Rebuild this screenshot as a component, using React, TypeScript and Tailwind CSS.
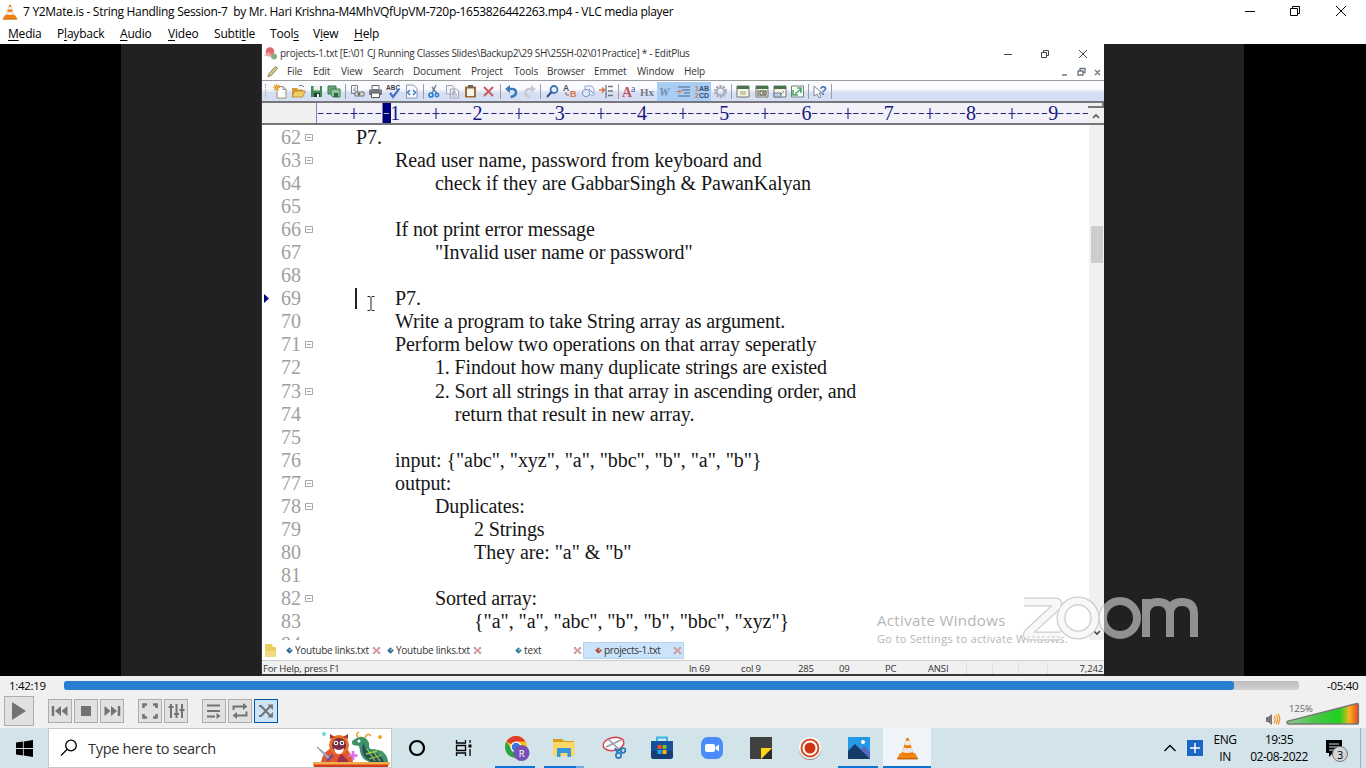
import React from "react";

const Cone = ({ s }: { s: number }) => (
  <svg width={s} height={s} viewBox="0 0 20 20">
    <path d="M3.2 14.2h13.6l2.2 4.6H1z" fill="#f28a13" />
    <path d="M1 18.2h18v1.3H1z" fill="#c45f06" />
    <path d="M9 .8h2l4.5 14.7q-5.500 2.400-11 0z" fill="#ef7d0e" />
    <path d="M8.300 3.300h3.400l1 3.400q-2.700 1-5.400 0z" fill="#eeeeee" />
    <path d="M6.500 9.200q3.500 1.300 7 0l1.200 3.800q-4.700 1.700-9.400 0z" fill="#e8e8e8" />
  </svg>
);

const vlcMenu = [
  ["w-[49px]", "", "M", "edia"],
  ["w-[63px]", "P", "l", "ayback"],
  ["w-[48px]", "", "A", "udio"],
  ["w-[46px]", "", "V", "ideo"],
  ["w-[56px]", "Subti", "t", "le"],
  ["w-[43px]", "Tool", "s", ""],
  ["w-[41px]", "V", "i", "ew"],
  ["w-[40px]", "", "H", "elp"],
];

const editMenu = [
  ["w-[26px]", "File"], ["w-[28px]", "Edit"], ["w-[32px]", "View"], ["w-[40px]", "Search"],
  ["w-[58px]", "Document"], ["w-[43px]", "Project"], ["w-[33px]", "Tools"], ["w-[47px]", "Browser"],
  ["w-[43px]", "Emmet"], ["w-[47px]", "Window"], ["w-[30px]", "Help"],
];

const normal = "tracking-[-0.090px]";
const tight = "tracking-[-0.140px]";
const loose = "tracking-[-0.040px]";

const lines: [number, number, string, boolean, string][] = [
  [62, 0, "P7.", true, loose],
  [63, 1, "Read user name, password from keyboard and", true, normal],
  [64, 2, "check if they are GabbarSingh & PawanKalyan", false, normal],
  [65, 0, "", false, normal],
  [66, 1, "If not print error message", true, tight],
  [67, 2, '"Invalid user name or password"', false, tight],
  [68, 0, "", false, normal],
  [69, 1, "P7.", false, loose],
  [70, 1, "Write a program to take String array as argument.", false, tight],
  [71, 1, "Perform below two operations on that array seperatly", true, normal],
  [72, 2, "1. Findout how many duplicate strings are existed", false, tight],
  [73, 2, "2. Sort all strings in that array in ascending order, and", true, tight],
  [74, 2, "    return that result in new array.", false, loose],
  [75, 0, "", false, normal],
  [76, 1, 'input: {"abc", "xyz", "a", "bbc", "b", "a", "b"}', false, loose],
  [77, 1, "output:", true, loose],
  [78, 2, "Duplicates:", true, tight],
  [79, 3, "2 Strings", false, tight],
  [80, 3, 'They are: "a" & "b"', false, loose],
  [81, 0, "", false, normal],
  [82, 2, "Sorted array:", true, tight],
  [83, 3, '{"a", "a", "abc", "b", "b", "bbc", "xyz"}', false, loose],
  [84, 0, "", false, normal],
];
const indent = ["pl-[40px]", "pl-[79px]", "pl-[119px]", "pl-[158px]"];

const I = ({ children, on }: { children: React.ReactNode; on?: boolean }) => (
  <span className={on ? "flex h-[19px] w-[18.2px] shrink-0 items-center justify-center bg-[#a9cdf3]" : "flex h-[18px] w-[18.2px] shrink-0 items-center justify-center"}>
    <svg width="15" height="15" viewBox="0 0 15 15" fill="none">{children}</svg>
  </span>
);
const Sep = () => <span className="mx-[1.7px] h-[15px] w-px shrink-0 bg-[#9a9ca6]" />;

const Toolbar = () => (
  <div className="flex h-[21px] items-center border-t border-[#9b9b9b] bg-linear-to-b from-[#fafbfe] from-40% to-[#d5def2] to-60% pl-[3px]">
    <span className="mr-[5px] h-[14px] border-l border-dotted border-[#a0a5b5]" />
    <I><path d="M4 2.500h6l3 3V14H4z" fill="#fff" stroke="#9a927c" /><path d="M10 2.500v3h3" stroke="#9a927c" /><path d="M3.500 0v7M0 3.500h7M1 1l5 5M6 1L1 6" stroke="#e9a53a" strokeWidth="1.200" /></I>
    <I><path d="M1 4h5l1 1.500h5V13H1z" fill="#d79c30" /><path d="M3.500 7H14.500l-3 6H1z" fill="#f3cb63" stroke="#a87a28" strokeWidth=".7" /><path d="M8 2q3-2 5 1" stroke="#56739c" /></I>
    <I><path d="M2 2h11v11H2z" fill="#3f8a58" /><path d="M4.500 2H11v4.500H4.500z" fill="#e5f0e7" /><path d="M5 9h6v4H5z" fill="#203f2d" /><path d="M8 10h2v3H8z" fill="#eee" /></I>
    <I><path d="M1 2h8v8H1z" fill="#69a57b" stroke="#397b50" /><path d="M4 5h9v8H6L4 11z" fill="#8dc49a" stroke="#397b50" /><path d="M7 9h4v4H7z" fill="#2f6643" /></I>
    <Sep />
    <I><path d="M1.500 1.500h6v8h-6zM4 4H6M3 6h3" stroke="#7c7f87" /><path d="M5 8h9v4H5z" fill="#ddd" stroke="#6c6f77" /><circle cx="9" cy="10" r="1.500" fill="#666" /></I>
    <I><path d="M4 1.500h7v4H4z" fill="#fff" stroke="#666" /><path d="M1 5.500h13V11H1z" fill="#777b83" /><path d="M3.500 9h8v4.500h-8z" fill="#fff" stroke="#555" /></I>
    <I><text x="0" y="5.500" fontSize="6.500" fontWeight="bold" fill="#3b3b45" fontFamily="Liberation Sans">ABC</text><path d="M4 9l3 4 6-8" stroke="#4470ce" strokeWidth="2.200" /></I>
    <I><path d="M2.500 1h7L13 4.500V14H2.500z" fill="#f8faff" stroke="#8f99b0" /><path d="M6 6L3.500 8.500 6 11M9 6l2.500 2.500L9 11" stroke="#3b83c8" strokeWidth="1.500" /></I>
    <Sep />
    <I><path d="M9 1L5 9M5 3l5 7" stroke="#5a7994" strokeWidth="1.300" /><circle cx="4" cy="11" r="2" stroke="#2c80cf" strokeWidth="1.700" /><circle cx="10" cy="11" r="1.700" stroke="#2c80cf" strokeWidth="1.500" /></I>
    <I><path d="M1.500 1.500h6l1.500 2V10H1.500zM5.500 5h6l2 2v7h-8z" fill="#f2f4fa" stroke="#a0a4b2" /><path d="M7 8h4M7 10h5M7 12h5" stroke="#a0a4b2" /></I>
    <I><path d="M2 2.500h11v11H2z" fill="#9d6839" /><path d="M4 4.500h7v7.500H4z" fill="#f3f3ee" /><path d="M5 1h5v3H5z" fill="#6d6359" /></I>
    <I><path d="M3 3l9 9M12 3l-9 9" stroke="#ce5555" strokeWidth="1.800" /></I>
    <Sep />
    <I><path d="M3 5h5q4 0 4 3.500T6.500 13" stroke="#3c7ab8" strokeWidth="2.600" /><path d="M6 1v8L1 5z" fill="#3c7ab8" /></I>
    <I><path d="M12 5H7.500Q3.500 5 3.500 8.500T8 13" stroke="#c4c9d4" strokeWidth="2.400" /><path d="M9 1v8l5-4z" fill="#c4c9d4" /></I>
    <Sep />
    <I><circle cx="9" cy="5.500" r="3.500" fill="#e6f1ff" stroke="#3f75b4" strokeWidth="1.800" /><path d="M6.500 8L2 13" stroke="#2d5083" strokeWidth="2" /></I>
    <I><text x="0" y="7" fontSize="8.500" fontWeight="bold" fill="#4c4c55" fontFamily="Liberation Sans">A</text><text x="7" y="13" fontSize="9" fontWeight="bold" fill="#df7049" fontFamily="Liberation Sans">B</text><path d="M3 8v3h3" stroke="#777" /></I>
    <I><path d="M4 2h7l2 3v6H4z" fill="#eef3ff" stroke="#92a7cd" /><circle cx="5" cy="9" r="3.700" fill="#dce7fb" stroke="#7d98c7" /><path d="M8 5l4 4" stroke="#6585bf" /></I>
    <I><path d="M0 6h5M3 3.500L5.500 6 3 8.500" stroke="#dc7745" strokeWidth="1.600" /><path d="M7 1v13M9 2.500h5M9 7h5M9 11.500h5" stroke="#70747d" strokeWidth="1.300" /></I>
    <Sep />
    <I><text x="0" y="13" fontSize="14" fontWeight="bold" fill="#c3545f" fontFamily="Liberation Serif">A</text><text x="9" y="8" fontSize="10" fill="#6265a6" fontFamily="Liberation Serif">a</text></I>
    <I><text x="0" y="12" fontSize="11" fontWeight="bold" fill="#77798b" fontFamily="Liberation Serif">Hx</text></I>
    <I on><text x="1" y="12" fontSize="12" fontStyle="italic" fontWeight="bold" fill="#6f8fb0" fontFamily="Liberation Serif">W</text></I>
    <I on><path d="M2 3h12M6 6h8M8 9h6M2 12h12" stroke="#49688a" /><path d="M0 7.500h5M3 5.500L5 7.500 3 9.500" stroke="#da7647" /></I>
    <I on><text x="0" y="7" fontSize="7" fontWeight="bold" fill="#d37a4f" fontFamily="Liberation Sans">1<tspan fill="#384e79">AB</tspan></text><text x="0" y="14" fontSize="7" fontWeight="bold" fill="#d37a4f" fontFamily="Liberation Sans">2<tspan fill="#384e79">CD</tspan></text></I>
    <I><circle cx="7.500" cy="7.500" r="5.500" stroke="#a5abb6" strokeWidth="2" strokeDasharray="2.200 1.250" /><circle cx="7.500" cy="7.500" r="3.700" stroke="#a5abb6" strokeWidth="1.700" /></I>
    <Sep />
    <I><path d="M2 2h12v11H2z" fill="#f5f5e6" stroke="#70776b" /><path d="M2 2h12v3H2z" fill="#49734e" /><path d="M5 7h6v4H5z" fill="#cccaa5" /></I>
    <I><path d="M2 2h12v11H2z" fill="#f5f5e6" stroke="#70776b" /><path d="M2 2h12v3H2z" fill="#49734e" /><path d="M4 6v6M6 7h6v4H6zM8 9h3" stroke="#6d6e61" strokeWidth="1.300" /></I>
    <I><path d="M2 2h12v11H2z" fill="#f5f5e6" stroke="#70776b" /><path d="M2 2h12v3H2z" fill="#49734e" /><path d="M2 9h7v4H2zM8 11l4-4" fill="#bed1e2" stroke="#6d829a" /></I>
    <I><path d="M1.500 2h12v11h-12z" fill="#f8fff8" stroke="#778078" /><path d="M5 10l6-5M7 4h4v5M3 6v5h5" stroke="#4ba766" strokeWidth="1.600" /></I>
    <Sep />
    <I><path d="M2 2v10l3-2 2 4 2-1-2-4h3z" fill="#fff" stroke="#666b78" strokeWidth=".8" /><text x="7.500" y="11" fontSize="12" fontWeight="bold" fill="#3e6fbc" fontFamily="Liberation Sans">?</text></I>
    <Sep />
  </div>
);

const Ruler = () => (
  <div className="flex h-[24px] overflow-hidden border-b-2 border-t-2 border-b-[#777777] border-t-[#77777b] bg-[#f0f0f0]">
    <div className="w-[55px] shrink-0 border-r border-[#7f7fc4]" />
    <div className="flex w-[771px] shrink-0 overflow-hidden bg-[#f1f1f7]">
      {[1, 2, 3, 4, 5, 6, 7, 8, 9, 10].map((n) => (
        <div key={n} className="flex w-[82.250px] shrink-0 items-center">
          <svg className="shrink-0" width="74" height="20" viewBox="0 0 74 20" stroke="#25258c">
            {n === 1 && <path d="M65.500 0h8.500v20h-8.500z" fill="#00007c" stroke="none" />}
            <path d="M1 10.500h73" strokeDasharray="5.400 2.820" />
            <path d="M37 5v11M33.500 10.500h7" strokeWidth="1.100" />
            {n === 1 && <path d="M67 10.500h5" stroke="#bbb" />}
          </svg>
          <span className="flex w-[8.250px] shrink-0 justify-center font-['Liberation_Serif',serif] text-[20px] leading-[20px] text-[#191982]">{n < 10 ? n : ""}</span>
        </div>
      ))}
    </div>
    <div className="flex flex-1 flex-col items-center bg-[#f0f0f0]">
      <div className="h-[5px] w-full border-b-2 border-r-2 border-[#777]" />
      <svg className="mt-[5px]" width="8" height="6"><path d="M1 5l3-3 3 3" fill="none" stroke="#555" strokeWidth="1.600" /></svg>
    </div>
  </div>
);

const TabX = () => (
  <svg className="shrink-0" width="9" height="9" viewBox="0 0 9 9"><path d="M1 1.500l7 6M8 1.500l-7 6" stroke="#d99a9f" strokeWidth="1.800" /><path d="M1 7.500h2M6 7.500h2M1 1.500h2M6 1.500h2" stroke="#aaa" /></svg>
);
const Dia = ({ c }: { c: string }) => (
  <svg className="shrink-0" width="7" height="7" viewBox="0 0 7 7"><path d="M3.500 .2l3.300 3.300-3.300 3.300L.2 3.500z" fill={c} /><circle cx="4.300" cy="2.800" r="1" fill="#a9cbe0" /></svg>
);

const Editor = () => (
  <div className="relative flex w-[843px] shrink-0 flex-col border-b-2 border-l border-[#383838] bg-white font-['Open_Sans',sans-serif] text-[#333333]">
    <div className="flex h-[19px] items-center pl-[2px]">
      <svg width="13" height="13" viewBox="0 0 13 13"><circle cx="6" cy="4.500" r="4.200" fill="#df696c" /><path d="M0 8l5-3 3 3-2 2z" fill="#f0a19a" /><circle cx="10" cy="9.500" r="3" fill="#8cad7e" /></svg>
      <span className="ml-[3px] w-[728px] whitespace-pre text-[10px] tracking-[-0.280px]">projects-1.txt [E:\01 CJ Running Classes Slides\Backup2\29 SH\25SH-02\01Practice] * - EditPlus</span>
      <svg className="ml-[-6px] shrink-0" width="90" height="14" viewBox="0 0 90 14" fill="none" stroke="#444"><path d="M2 7.500h8M39.500 5.500h5v5h-5zM41.500 5V3.500h5v5H45M77 3l8 8M85 3l-8 8" /></svg>
    </div>
    <div className="flex h-[17px] items-center pl-[4px]">
      <svg width="14" height="14" viewBox="0 0 14 14"><path d="M2 12l1-3 7-8 2.500 2-7 8z" fill="#d2c38a" stroke="#776b49" strokeWidth=".8" /></svg>
      <div className="ml-[8px] flex text-[10px] tracking-[-0.150px]">
        {editMenu.map(([w, t]) => <span key={t} className={w + " shrink-0 whitespace-nowrap"}>{t}</span>)}
      </div>
      <svg className="ml-[344px] shrink-0" width="46" height="12" viewBox="0 0 46 12" fill="none" stroke="#6b7580" strokeWidth="1.300"><path d="M4 9h5M20 5h5v4h-5zM22 4.500v-2h5v4h-2M37 4l5 5M42 4l-5 5" /></svg>
    </div>
    <Toolbar />
    <Ruler />
    <div className="flex h-[515px] overflow-hidden">
      <div className="w-[827px] overflow-hidden pt-px font-['Liberation_Serif',serif] text-[20px] text-[#161616]">
        {lines.map(([n, d, t, fold, track]) => (
          <div key={n} className="flex h-[23.050px] items-center whitespace-pre leading-[23px]">
            <span className="flex w-[19px] shrink-0">
              {n === 69 && <svg className="ml-[2px]" width="6" height="9"><path d="M0 0l5 4.500L0 9z" fill="#00007c" /></svg>}
            </span>
            <span className="w-[20px] shrink-0 text-[#a0a0a0]">{n}</span>
            <span className="flex w-[14px] shrink-0 justify-end pr-px">
              {fold && <svg width="9" height="9" viewBox="0 0 9 9" fill="none" stroke="#a8a8a8"><path d="M.5 1.500h7v6h-7zM2 4.500h4" /></svg>}
            </span>
            {n === 69 ? (
              <span className="ml-px flex items-center">
                <span className="ml-[39px] h-[21px] w-[2px] bg-[#222]" />
                <svg className="ml-[9px] mr-[19px] mt-[10px]" width="10" height="15" viewBox="0 0 10 15" fill="none" stroke="#222"><path d="M1.500 .5h2.500l1 1 1-1h2.500M5 1.500v12M1.500 14.500h2.500l1-1 1 1h2.500" /></svg>
                <span className={track}>{t}</span>
              </span>
            ) : (
              <span className={"ml-px " + indent[d] + " " + track}>{t}</span>
            )}
          </div>
        ))}
      </div>
      <div className="flex flex-1 flex-col items-center bg-[#f0f0f0]">
        <div className="mt-[101px] h-[37px] w-[12px] bg-[#cdcdcd]" />
        <svg className="mt-[367px]" width="8" height="6"><path d="M1 1l3 3 3-3" fill="none" stroke="#444" strokeWidth="1.600" /></svg>
      </div>
    </div>
    <div className="flex h-[20px] items-center whitespace-nowrap pl-[3px] text-[10px] tracking-[-0.150px]">
      <svg className="shrink-0" width="12" height="13" viewBox="0 0 12 13"><path d="M0 0h7l1 3h3v10H0z" fill="#e9cf5e" /><path d="M0 7h11v6H0z" fill="#f1dc82" /></svg>
      <span className="ml-[9px] flex w-[91px] items-center"><Dia c="#2f6c94" /><span className="ml-[2px] w-[77px] shrink-0 tracking-[-0.250px]">Youtube links.txt</span><TabX /></span>
      <span className="ml-[10px] flex w-[91px] items-center"><Dia c="#2f6c94" /><span className="ml-[2px] w-[77px] shrink-0 tracking-[-0.250px]">Youtube links.txt</span><TabX /></span>
      <span className="ml-[37px] flex w-[68px] items-center"><Dia c="#2f8094" /><span className="ml-[2px] w-[49px] shrink-0">text</span><TabX /></span>
      <span className="flex h-[17px] w-[101px] items-center border border-[#b3d4f2] bg-[#cbe3fb] pl-[11px]"><Dia c="#b8492f" /><span className="ml-[2px] w-[69px] shrink-0 tracking-[-0.350px]">projects-1.txt</span><TabX /></span>
    </div>
    <div className="flex h-[14px] items-center border-t border-[#cccccc] bg-[#f0f0f0] pl-px pt-[2px] text-[9.500px] leading-[12px] tracking-[-0.150px]">
      <span className="w-[426px]">For Help, press F1</span><span className="w-[52px]">ln 69</span><span className="w-[57px]">col 9</span><span className="w-[41px]">285</span><span className="w-[46px]">09</span><span className="w-[43px]">PC</span><span className="w-[38px]">ANSI</span>
      <span className="h-full w-[26px] border-l border-[#ddd]" /><span className="h-full w-[26px] border-l border-[#ddd]" /><span className="h-full w-[29px] border-l border-[#ddd]" /><span className="flex h-full flex-1 items-center justify-end border-l border-[#ddd] pr-px">7,242</span>
    </div>
    <div className="absolute left-[615px] top-[566px] whitespace-nowrap text-[#b5b5b5]">
      <div className="text-[15px] leading-[20px] tracking-[0.350px]">Activate Windows</div>
      <div className="text-[11px] leading-[17px] tracking-[0.310px]">Go to Settings to activate Windows.</div>
    </div>
  </div>
);

const zoomShapes = (
  <>
    <path d="M3 6h31q5 0 1 5L8 36q-4 4 1 4h31" />
    <circle cx="57" cy="22" r="17" />
    <circle cx="99" cy="22" r="17" />
    <path d="M125 41V3M125 18q0-12 12-12t12 12V41M149 18q0-12 12-12t12 12V41" />
  </>
);
const ZoomMark = () => (
  <svg className="absolute left-[1021px] top-[552px]" width="180" height="46" viewBox="0 0 180 46" fill="none">
    <defs>
      <clipPath id="l"><path d="M0 0h83v46H0z" /></clipPath>
      <clipPath id="r"><path d="M83 0h97v46H83z" /></clipPath>
    </defs>
    <g clipPath="url(#l)">
      <g stroke="#cdcdcd" strokeWidth="9">{zoomShapes}</g>
      <g stroke="#f8f8f8" strokeWidth="6.500">{zoomShapes}</g>
    </g>
    <path d="M6 41h34" stroke="#cdcdcd" strokeDasharray="3 2" />
    <g clipPath="url(#r)" stroke="#919191" strokeWidth="8">{zoomShapes}</g>
  </svg>
);

const Btn = ({ children, cls }: { children: React.ReactNode; cls?: string }) => (
  <span className={"flex size-[24px] shrink-0 items-center justify-center border " + (cls || "border-[#adadad] bg-[#e1e1e1]")}>
    <svg width="18" height="18" viewBox="0 0 18 18" fill="none" stroke="#737373" strokeWidth="2">{children}</svg>
  </span>
);

const TaskItem = ({ children, cls }: { children: React.ReactNode; cls?: string }) => (
  <span className={"relative flex h-[40px] shrink-0 items-center justify-center " + (cls || "w-[49px]")}>{children}</span>
);
const Line = () => <span className="absolute bottom-0 left-[4px] h-[2px] w-[40px] bg-[#0a74d4]" />;

export default function App() {
  return (
    <div className="flex h-[768px] w-[1366px] flex-col overflow-hidden bg-white font-['Open_Sans',sans-serif] text-black">
      <div className="flex h-[22px] shrink-0 items-center pl-[2px] pt-px">
        <Cone s={16} />
        <span className="ml-[5px] w-[1220px] shrink-0 whitespace-pre text-[12px] tracking-[-0.297px]">7 Y2Mate.is - String Handling Session-7  by Mr. Hari Krishna-M4MhVQfUpVM-720p-1653826442263.mp4 - VLC media player</span>
        <svg className="-mt-[2px] shrink-0" width="110" height="16" viewBox="0 0 110 16" fill="none" stroke="#000"><path d="M2 8.500h10M47.500 5.500h7v7h-7zM49.500 5V3.500h7v7H55M93 3l10 10M103 3L93 13" /></svg>
      </div>
      <div className="flex h-[22px] shrink-0 items-center pl-[8px] pt-[2px] text-[12px] tracking-[-0.200px]">
        {vlcMenu.map(([w, a, u, b]) => (
          <span key={a + u + b} className={w}>{a}<u className="underline-offset-2">{u}</u>{b}</span>
        ))}
      </div>
      <div className="relative flex h-[632px] shrink-0 bg-black">
        <div className="ml-[121px] w-[140px] shrink-0 bg-[#212121]" />
        <Editor />
        <div className="w-[140px] shrink-0 bg-[#212121]" />
        <ZoomMark />
      </div>

      <div className="flex h-[52px] shrink-0 flex-col bg-[#f0f0f0]">
        <div className="flex h-[19px] items-center">
          <span className="w-[64px] pl-[9px] text-[11.500px] tracking-[-0.300px]">1:42:19</span>
          <div className="mb-[1px] h-[9px] w-[1235px] rounded-[3px] bg-linear-to-b from-[#bdbdbd] to-[#d2d2d2]"><div className="h-full w-[1170px] rounded-[3px] bg-[#277dd0]" /></div>
          <span className="ml-[28px] text-[11.500px] tracking-[-0.300px]">-05:40</span>
        </div>
        <div className="flex h-[33px] items-center pb-[2px] pl-[4px]">
          <span className="flex size-[30px] items-center justify-center border border-[#adadad] bg-[#e1e1e1]"><svg width="16" height="18"><path d="M1 0l14 9L1 18z" fill="#737373" /></svg></span>
          <div className="ml-[14px] flex gap-[2px]">
            <Btn><path d="M2 4v10" strokeWidth="2.500" /><path d="M10 4v10L4 9zM16.500 4v10l-6-5z" fill="#737373" stroke="none" /></Btn>
            <Btn><path d="M4 4h10v10H4z" fill="#737373" stroke="none" /></Btn>
            <Btn><path d="M16 4v10" strokeWidth="2.500" /><path d="M8 4v10l6-5zM1.500 4v10l6-5z" fill="#737373" stroke="none" /></Btn>
          </div>
          <div className="ml-[14px] flex gap-[2px]">
            <Btn><path d="M6 2.500H2.500V6M12 2.500h3.500V6M6 15.500H2.500V12M12 15.500h3.500V12" strokeWidth="2.600" /></Btn>
            <Btn><path d="M4 2v14M9.500 2v14M15 2v14M1.500 5h5M7 12h5M12.500 8h5" /></Btn>
          </div>
          <div className="ml-[14px] flex gap-[2px]">
            <Btn><path d="M2 3.500h13M2 9h13M2 14.500h8" /><path d="M11.500 11v6l4-3z" fill="#737373" stroke="none" /></Btn>
            <Btn><path d="M2.500 8V4.500h10M15.500 9.500V13.500h-10" /><path d="M12 1v7l4.500-3.500zM6 10v7L1.500 13.500z" fill="#737373" stroke="none" /></Btn>
            <Btn cls="border-[#00559f] bg-[#cce4f7]"><path d="M2 4h2l9 9.500M2 14h2l9-9.500" /><path d="M10.500 2.500H16V8zM10.500 15.500H16V10z" fill="#737373" stroke="none" /></Btn>
          </div>
          <svg className="ml-[987px] mt-[16px]" width="16" height="14" viewBox="0 0 16 14" fill="none"><path d="M1 5v5h2l4 3V2L3 5z" fill="#777" /><path d="M9 4q2 3.500 0 7M11 2.500q3 5 0 9.500M13 1.500q3.500 5.500 0 11" stroke="#f29a2c" strokeWidth="1.300" /></svg>
          <div className="relative ml-[4px] h-[24px] w-[76px] self-start">
            <svg width="75" height="30" viewBox="0 0 75 30"><defs><linearGradient id="v"><stop offset="0" stopColor="#8ccc8c" /><stop offset=".4" stopColor="#49c649" /><stop offset=".74" stopColor="#20d020" /><stop offset=".87" stopColor="#f5b71b" /><stop offset="1" stopColor="#ee3f25" /></linearGradient></defs><path d="M2 27.500Q1 27 3 26L72 8.500q1.500 0 1.500 1.500V28q0 1-1 1H3q-1 0-1-1.500z" fill="url(#v)" stroke="#777" strokeWidth="1.300" /></svg>
            <span className="absolute left-[4px] top-[7px] text-[9.500px] tracking-[-0.100px] text-[#666]">125%</span>
          </div>
        </div>
      </div>

      <div className="flex h-[40px] shrink-0 items-center bg-[#d3e3ea]">
        <span className="flex w-[48px] shrink-0 justify-center"><svg width="17" height="17" viewBox="0 0 16 16"><path d="M0 2.300L6.500 1.400v6.200H0zM7.300 1.300L16 0v7.600H7.300zM0 8.400h6.500v6.200L0 13.700zM7.300 8.400H16V16l-8.700-1.300z" /></svg></span>
        <div className="flex h-[40px] w-[344px] shrink-0 items-center border border-[#c6c8ca] bg-white pl-[11px]">
          <svg width="18" height="18" viewBox="0 0 18 18" fill="none" stroke="#000" strokeWidth="1.300"><circle cx="11" cy="6.500" r="5.300" /><path d="M7 10.500L1 16.500" /></svg>
          <span className="ml-[10px] mt-px w-[225px] text-[14.500px] tracking-[-0.300px] text-[#303030]">Type here to search</span>
          <svg width="78" height="38" viewBox="0 0 78 38">
            <path d="M0 34h76l-1 4H1z" fill="#d93b1a" /><path d="M0 33h77v2.500H0z" fill="#f2b04b" />
            <path d="M8 33q2-11 12-15l14 2q6 7 6 13z" fill="#e4572e" /><path d="M28 24l8 9H24z" fill="#9d2c4e" />
            <circle cx="26" cy="16" r="10" fill="#e96f22" /><path d="M17 10l0-5 5 3M35 10l0-5-5 3" fill="#9e3b28" /><circle cx="26" cy="16" r="7" fill="#7e2a49" /><circle cx="23" cy="14" r="2.300" fill="#fff" /><circle cx="29" cy="14" r="2.300" fill="#fff" /><circle cx="23" cy="14" r="1" /><circle cx="29" cy="14" r="1" /><path d="M21 19q5 4 10 0-1 6-5 6t-5-6z" fill="#fff" />
            <path d="M4 18l14 11-2 2z" fill="#b9bfd9" stroke="#6b6c99" strokeWidth=".7" /><path d="M20 26l-6 6" stroke="#5c4b9d" strokeWidth="2" />
            <path d="M40 16q-3-4 2-6 5-4 10-1 5 3 4 9 1 3 5 2l8 2q6 5 6 11H56q-8-3-9-11l-1-5z" fill="#3d9367" /><path d="M51 14q1 9 8 10 9 0 12 9H58q-9-5-9-15z" fill="#235457" /><path d="M54 20l8 12M60 22l7 10M53 25l11-3M56 30l13-4" stroke="#9ec94c" strokeWidth="1.300" /><path d="M46 9q-5-4 0-6M52 9q2-6 6-2" stroke="#e2a534" strokeWidth="1.600" fill="none" /><circle cx="46" cy="12" r="1.500" fill="#fff" />
            <path d="M40 22v9M35.500 26.500h9" stroke="#d771e8" strokeWidth="2.600" /><circle cx="11" cy="5" r="2" fill="#6bd4dc" /><circle cx="67" cy="8" r="2" fill="#f4a51f" />
          </svg>
        </div>
        <TaskItem><svg width="18" height="18" fill="none" stroke="#000" strokeWidth="2.200"><circle cx="9" cy="9" r="7" /></svg></TaskItem>
        <TaskItem><svg className="mr-[3px]" width="18" height="18" viewBox="0 0 18 18" fill="none" stroke="#000" strokeWidth="1.300"><path d="M1.500 1v3h9V1M1.500 17v-3h9v3M1.500 6.500h9v5h-9zM15 1v3M15 10v7" /><path d="M13.500 5.500h3v3h-3z" fill="#000" stroke="none" /></svg></TaskItem>
        <TaskItem cls="ml-px w-[49px]">
          <svg width="28" height="28" viewBox="0 0 28 28"><circle cx="14" cy="13" r="11" fill="#fbc116" /><path d="M14 13L4.500 7.500A11 11 0 0 1 23.500 7.500H14z" fill="#df3c2c" /><path d="M4.500 7.500A11 11 0 0 0 14 24l5-8.500-5-2.500-4.500 2.500z" fill="#2aa14b" /><circle cx="14" cy="13" r="5.500" fill="#fff" /><circle cx="14" cy="13" r="4.300" fill="#3478e5" /><circle cx="19.500" cy="19" r="8" fill="#7752b5" /><text x="16.700" y="22.500" fontSize="9.500" fill="#fff" fontFamily="Open Sans">R</text></svg><Line />
        </TaskItem>
        <TaskItem>
          <svg className="mr-[2px]" width="22" height="20" viewBox="0 0 22 20"><path d="M0 1h9l2 2h10v15H0z" fill="#d99d16" /><path d="M0 4h21.500v14H0z" fill="#fbd668" /><path d="M4 19v-8q0-1 1-1h12q1 0 1 1v8h-3.500v-4h-7v4z" fill="#3297dc" /></svg><Line /><span className="absolute bottom-0 left-[36px] h-[2px] w-[8px] bg-[#6eacdf]" />
        </TaskItem>
        <TaskItem>
          <svg width="26" height="26" viewBox="0 0 26 26" fill="none"><ellipse cx="12.500" cy="9" rx="10.500" ry="6.500" transform="rotate(-12 12.500 9)" fill="#fbfbfb" stroke="#d7464d" strokeWidth="1.500" /><path d="M5 12L20 5M7 4l14 13" stroke="#9b9fa4" strokeWidth="1.700" /><path d="M14 13l3 5M21 14l-5 2" stroke="#247bbb" strokeWidth="2" /><circle cx="17.500" cy="20.500" r="2.600" stroke="#247bbb" strokeWidth="1.700" /><circle cx="22" cy="15.500" r="2.300" stroke="#247bbb" strokeWidth="1.700" /></svg>
        </TaskItem>
        <TaskItem>
          <svg className="mr-[2px]" width="24" height="24" viewBox="0 0 24 24"><path d="M7 6V1.500h10V6" fill="none" stroke="#36b8e6" strokeWidth="2" /><path d="M1 5h22v15q0 3-3 3H4q-3 0-3-3z" fill="#155099" /><path d="M1 15h22v5q0 3-3 3H4q-3 0-3-3z" fill="#133e76" /><path d="M7.500 9h4v4h-4z" fill="#f05328" /><path d="M12.500 9h4v4h-4z" fill="#80bc25" /><path d="M7.500 14h4v4h-4z" fill="#20a4ed" /><path d="M12.500 14h4v4h-4z" fill="#ffb911" /></svg>
        </TaskItem>
        <TaskItem><svg width="22" height="22" viewBox="0 0 22 22"><rect width="22" height="22" rx="7" fill="#4a8cfa" /><rect x="4" y="7" width="10" height="8" rx="2" fill="#fff" /><path d="M14.500 10L18 7.500v7L14.500 12z" fill="#fff" /></svg></TaskItem>
        <TaskItem><svg width="22" height="22" viewBox="0 0 22 22"><path d="M0 0h22v11L11 22H0z" fill="#404040" /><path d="M22 11v11H11z" fill="#2b2b2b" /><path d="M11 11h11L11 22z" fill="#ffd60f" /></svg></TaskItem>
        <TaskItem><svg width="24" height="24" viewBox="0 0 24 24"><circle cx="12" cy="13" r="11" fill="#8d8984" /><circle cx="12" cy="12" r="11" fill="#fff" /><circle cx="12" cy="12" r="8.500" fill="none" stroke="#d24c27" strokeWidth="2" /><circle cx="12" cy="12" r="5.500" fill="#cc3510" /></svg></TaskItem>
        <TaskItem><svg width="22" height="22" viewBox="0 0 22 22"><path d="M0 0h22v22H0z" fill="#2699e5" /><path d="M10 15l6-6 6 6v7H10z" fill="#5668c0" /><path d="M0 14l7-7 15 15H0z" fill="#153b66" /><circle cx="15" cy="5" r="2" fill="#fff" /></svg><Line /></TaskItem>
        <TaskItem cls="bg-[#eef4f7] w-[48px]"><Cone s={23} /><span className="absolute bottom-0 left-0 h-[2px] w-full bg-[#0a74d4]" /></TaskItem>
        <div className="ml-[232px] flex h-full w-[203px] shrink-0 items-center text-[12px] leading-[17px] tracking-[-0.500px]">
          <svg className="shrink-0" width="14" height="8" fill="none" stroke="#000" strokeWidth="1.300"><path d="M1.500 7L7 1.500 12.500 7" /></svg>
          <span className="ml-[10px] flex size-[16px] shrink-0 items-center justify-center bg-[#1c66c4]"><svg width="10" height="10" stroke="#fff" strokeWidth="1.500"><path d="M5 0v10M0 5h10" /></svg></span>
          <span className="ml-[6px] w-[32px] shrink-0 text-center">ENG<br />IN</span>
          <span className="ml-[2px] w-[72px] shrink-0 text-center">19:35<br />02-08-2022</span>
          <span className="relative ml-[6px] h-[30px] w-[34px] shrink-0">
            <svg className="absolute left-[4px] top-[6px]" width="17" height="18"><path d="M1 1h16v13H8l-4 4v-4H1z" /><path d="M4 5h10M4 8h10M4 11h6" stroke="#d3e3ea" /></svg>
            <span className="absolute left-[11px] top-[13px] flex size-[16px] items-center justify-center rounded-full border border-[#777] bg-[#d2d5d8] text-[11px]">3</span>
          </span>
          <span className="ml-[5px] h-full w-px shrink-0 bg-[#a5b0b6]" />
        </div>
      </div>
    </div>
  );
}
